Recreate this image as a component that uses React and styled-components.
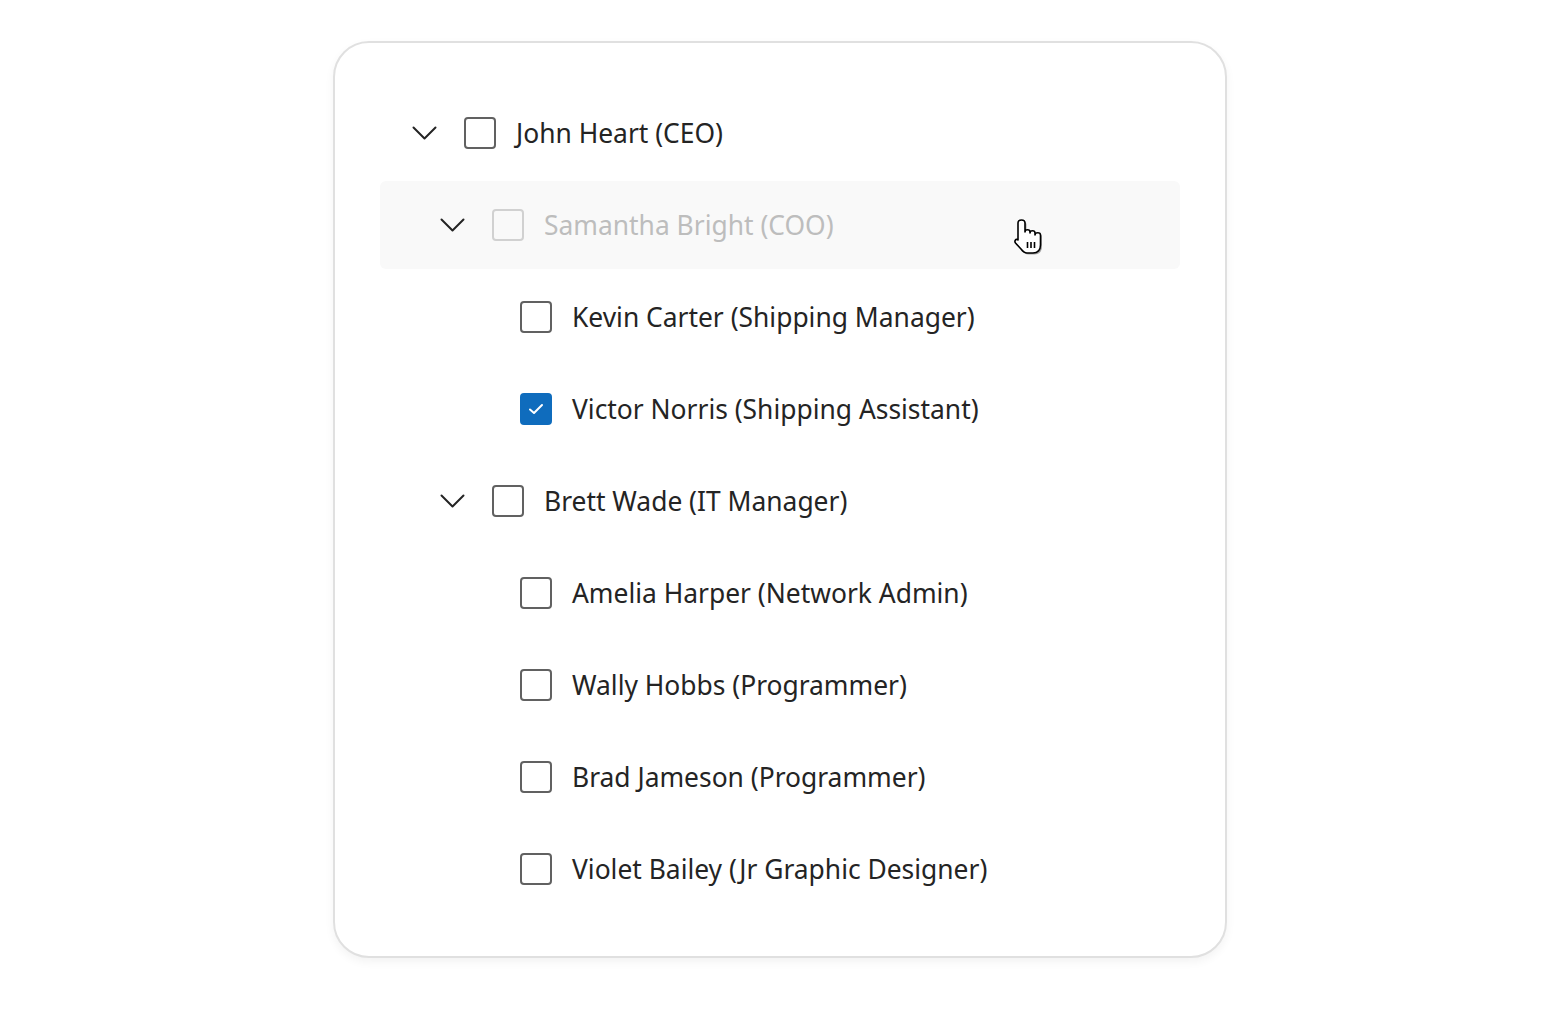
import React from "react";
import styled, { createGlobalStyle } from "styled-components";

const GlobalStyle = createGlobalStyle`
  html, body {
    margin: 0;
    padding: 0;
    background: #ffffff;
    font-family: "Noto Sans", "Open Sans", sans-serif;
  }
`;

const Page = styled.div`
  width: 1560px;
  height: 1016px;
  display: flex;
  justify-content: center;
  align-items: flex-start;
  padding-top: 41px;
  box-sizing: border-box;
`;

const Card = styled.div`
  width: 894px;
  box-sizing: border-box;
  border: 2px solid #e0e0e0;
  border-radius: 36px;
  background: #ffffff;
  box-shadow: 0 4px 10px rgba(0, 0, 0, 0.05);
  padding: 46px 45px 43px;
  display: flex;
  flex-direction: column;
  gap: 4px;
`;

const Row = styled.div`
  position: relative;
  height: 88px;
  flex: none;
  display: flex;
  align-items: center;
  padding-left: ${(p) => 32 + p.$level * 28}px;
  border-radius: 6px;
  background: ${(p) => (p.$hover ? "#f9f9f9" : "transparent")};
  color: ${(p) => (p.$disabled ? "#bdbdbd" : "#242424")};
`;

const Chevron = styled.span`
  width: 25px;
  height: 32px;
  margin-right: 27px;
  display: flex;
  align-items: center;
  justify-content: center;
`;

const Spacer = styled.span`
  width: 52px;
  flex: none;
`;

const Box = styled.span`
  width: 32px;
  height: 32px;
  box-sizing: border-box;
  border-radius: 4px;
  border: 2px solid
    ${(p) => (p.$checked ? "#0f6cbd" : p.$disabled ? "#d1d1d1" : "#616161")};
  background: ${(p) => (p.$checked ? "#0f6cbd" : "transparent")};
  display: flex;
  align-items: center;
  justify-content: center;
  flex: none;
  margin-right: 20px;
`;

const Label = styled.span`
  font-size: 26.4px;
  line-height: 32px;
  white-space: nowrap;
`;

const Cursor = styled.svg`
  position: absolute;
  left: 633px;
  top: 37px;
`;

const people = [
  { name: "John Heart (CEO)", level: 0, parent: true },
  { name: "Samantha Bright (COO)", level: 1, parent: true, hover: true, disabled: true },
  { name: "Kevin Carter (Shipping Manager)", level: 2 },
  { name: "Victor Norris (Shipping Assistant)", level: 2, checked: true },
  { name: "Brett Wade (IT Manager)", level: 1, parent: true },
  { name: "Amelia Harper (Network Admin)", level: 2 },
  { name: "Wally Hobbs (Programmer)", level: 2 },
  { name: "Brad Jameson (Programmer)", level: 2 },
  { name: "Violet Bailey (Jr Graphic Designer)", level: 2 },
];

const ChevronIcon = () => (
  <svg width="25" height="14" viewBox="0 0 25 14" fill="none">
    <path d="M1.5 1.5 L12.5 12.5 L23.5 1.5" stroke="#242424" strokeWidth="2" strokeLinecap="round" strokeLinejoin="round" />
  </svg>
);

const CheckIcon = () => (
  <svg width="16" height="12" viewBox="0 0 16 12" fill="none">
    <path d="M2 6.5 L6 10 L14 2" stroke="#ffffff" strokeWidth="2" strokeLinecap="round" strokeLinejoin="round" />
  </svg>
);

// windows-style pointing hand
const handPath =
  "M5 22 L5 5 C5 1 12 1 12 5 L12 14 C12 11 17 11 17 14 L17 15 C17 12 22 12 22 15 L22 17 C22 14 27.5 14 27.5 17 L27.5 27 C27.5 32 24.5 35 20 35 L14 35 C11 35 9.5 33 8 31 L2.5 25 C1 23 3 20 5 22 Z";

const HandCursor = () => (
  <Cursor width="32" height="38" viewBox="0 0 32 38">
    <path d={handPath} fill="rgba(0,0,0,0.35)" transform="translate(1.5 1.5)" />
    <path d={handPath} fill="#ffffff" stroke="#000000" strokeWidth="1.6" strokeLinejoin="round" />
    <path d="M14.5 24 V30 M18 24 V30 M21.5 24 V30" stroke="#000000" strokeWidth="1.6" />
  </Cursor>
);

export default function App() {
  return (
    <>
      <GlobalStyle />
      <Page>
        <Card>
          {people.map((p) => (
            <Row key={p.name} $level={p.level} $hover={p.hover} $disabled={p.disabled}>
              {p.parent ? (
                <Chevron>
                  <ChevronIcon />
                </Chevron>
              ) : (
                <Spacer />
              )}
              <Box $checked={p.checked} $disabled={p.disabled}>
                {p.checked && <CheckIcon />}
              </Box>
              <Label>{p.name}</Label>
              {p.hover && <HandCursor />}
            </Row>
          ))}
        </Card>
      </Page>
    </>
  );
}
